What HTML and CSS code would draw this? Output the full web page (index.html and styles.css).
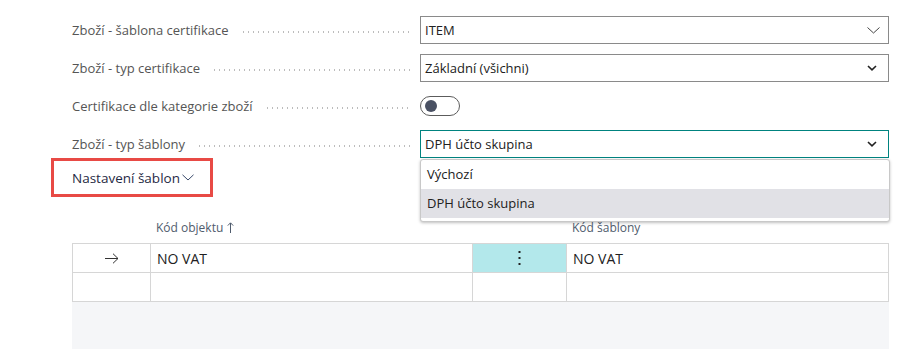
FILE: index.html
```html
<!DOCTYPE html>
<html lang="cs">
  <head>
    <meta charset="UTF-8" />
    <meta name="viewport" content="width=device-width, initial-scale=1.0" />
    <title>Nastavení certifikace</title>
    <link rel="stylesheet" href="styles.css">
  </head>
  <body>
    <div class="page">

      <div class="field">
        <span class="label">Zboží - šablona certifikace</span>
        <span class="leader"></span>
        <div class="select">
          <span>ITEM</span>
          <svg class="chev-thin" width="13" height="7" viewBox="0 0 13 7"><path d="M0.5 0.5 L6.5 6 L12.5 0.5" fill="none" stroke="#444" stroke-width="1"/></svg>
        </div>
      </div>

      <div class="field">
        <span class="label">Zboží - typ certifikace</span>
        <span class="leader"></span>
        <div class="select">
          <span>Základní (všichni)</span>
          <svg class="chev-bold" width="10" height="6" viewBox="0 0 10 6"><path d="M1 1 L5 4.8 L9 1" fill="none" stroke="#222" stroke-width="1.6"/></svg>
        </div>
      </div>

      <div class="field">
        <span class="label">Certifikace dle kategorie zboží</span>
        <span class="leader"></span>
        <div class="toggle-wrap">
          <span class="toggle"><span class="knob"></span></span>
        </div>
      </div>

      <div class="field">
        <span class="label">Zboží - typ šablony</span>
        <span class="leader"></span>
        <div class="select select-open">
          <span>DPH účto skupina</span>
          <svg class="chev-bold" width="10" height="6" viewBox="0 0 10 6"><path d="M1 1 L5 4.8 L9 1" fill="none" stroke="#222" stroke-width="1.6"/></svg>
          <ul class="dropdown">
            <li>Výchozí</li>
            <li class="active">DPH účto skupina</li>
          </ul>
        </div>
      </div>

      <div class="section">
        <div class="section-title">
          Nastavení šablon
          <svg width="12" height="7" viewBox="0 0 12 7"><path d="M0.5 0.8 L6 6 L11.5 0.8" fill="none" stroke="#3a4a6b" stroke-width="1"/></svg>
        </div>
      </div>

      <div class="grid">
        <div class="grid-head">
          <div></div>
          <div>Kód objektu <svg class="sort" width="7" height="11" viewBox="0 0 7 11"><path d="M3.5 11 V1 M0.8 3.6 L3.5 0.8 L6.2 3.6" fill="none" stroke="#505c6d" stroke-width="1"/></svg></div>
          <div></div>
          <div>Kód šablony</div>
        </div>
        <div class="grid-row">
          <div class="cell cell-arrow">
            <svg width="14" height="11" viewBox="0 0 14 11"><path d="M0 5.5 H13 M8 0.7 L13 5.5 L8 10.3" fill="none" stroke="#333" stroke-width="1"/></svg>
          </div>
          <div class="cell">NO VAT</div>
          <div class="cell cell-menu">
            <svg width="3" height="14" viewBox="0 0 3 14"><rect x="0.5" y="0" width="2" height="2" fill="#222"/><rect x="0.5" y="6" width="2" height="2" fill="#222"/><rect x="0.5" y="12" width="2" height="2" fill="#222"/></svg>
          </div>
          <div class="cell">NO VAT</div>
        </div>
        <div class="grid-row grid-row-last">
          <div class="cell"></div>
          <div class="cell"></div>
          <div class="cell"></div>
          <div class="cell"></div>
        </div>
        <div class="grid-empty"></div>
      </div>

    </div>
  </body>
</html>
```

FILE: styles.css
```css
body {
  margin: 0;
  background: #fff;
  font-family: "Segoe UI", "Open Sans", sans-serif;
  font-size: 13px;
  color: #212121;
}

.page {
  padding: 16px 16px 0 72px;
}

.field {
  display: flex;
  align-items: center;
  height: 28px;
  margin-bottom: 10px;
}

.label {
  color: #555;
  white-space: nowrap;
}

.leader {
  flex: 1;
  height: 2px;
  margin: 4px 10px 0 12px;
  background-image: radial-gradient(circle, #bcbcbc 0.8px, transparent 1px);
  background-size: 5px 2px;
  background-repeat: repeat-x;
}

.select {
  position: relative;
  box-sizing: border-box;
  width: 469px;
  height: 28px;
  border: 1px solid #8a8a8a;
  display: flex;
  align-items: center;
  justify-content: space-between;
  padding: 0 8px 0 4px;
}

.chev-bold {
  margin-right: 3px;
}

.select-open {
  border-color: #00837f;
}

.dropdown {
  position: absolute;
  left: -1px;
  top: 28px;
  width: 468px;
  margin: 0;
  padding: 0 0 3px 0;
  list-style: none;
  background: #fff;
  border: 1px solid #c8c8c8;
  border-radius: 3px;
  box-shadow: 0 1px 3px rgba(0, 0, 0, 0.25);
  z-index: 5;
}

.dropdown li {
  height: 29px;
  line-height: 29px;
  padding-left: 6px;
}

.dropdown li.active {
  background: #e1e1e6;
}

.toggle-wrap {
  width: 469px;
  display: flex;
  align-items: center;
}

.toggle {
  box-sizing: border-box;
  width: 40px;
  height: 20px;
  border: 1px solid #5c5c5c;
  border-radius: 10px;
  display: flex;
  align-items: center;
  padding-left: 4px;
}

.knob {
  width: 12px;
  height: 12px;
  border-radius: 50%;
  background: #4a5163;
}

.section {
  margin: -10px 0 0 -21px;
  width: 162px;
  height: 39px;
  box-sizing: border-box;
  border: 3px solid #e84a45;
  display: flex;
  align-items: center;
  padding-left: 18px;
}

.section-title {
  font-size: 13.5px;
  color: #1f2a44;
  display: flex;
  align-items: center;
  gap: 2px;
}

.grid {
  width: 817px;
  margin-top: 14px;
}

.grid-head,
.grid-row {
  display: grid;
  grid-template-columns: 78px 322px 94px 1fr;
}

.grid-head {
  height: 32px;
  align-items: center;
  font-size: 12px;
  color: #505c6d;
}

.grid-head div {
  padding-left: 6px;
}

.sort {
  vertical-align: -1px;
  margin-left: 1px;
}

.grid-row {
  height: 28px;
  border-left: 1px solid #d6d6d6;
  border-top: 1px solid #d6d6d6;
}

.grid-row-last {
  border-bottom: 1px solid #d6d6d6;
}

.cell {
  border-right: 1px solid #d6d6d6;
  display: flex;
  align-items: center;
  padding-left: 6px;
  font-size: 14px;
}

.cell-arrow {
  justify-content: center;
  padding-left: 0;
}

.cell-menu {
  background: #b3e8eb;
  justify-content: center;
  padding-left: 0;
}

.grid-empty {
  height: 50px;
  background: #f5f6f8;
}
```
